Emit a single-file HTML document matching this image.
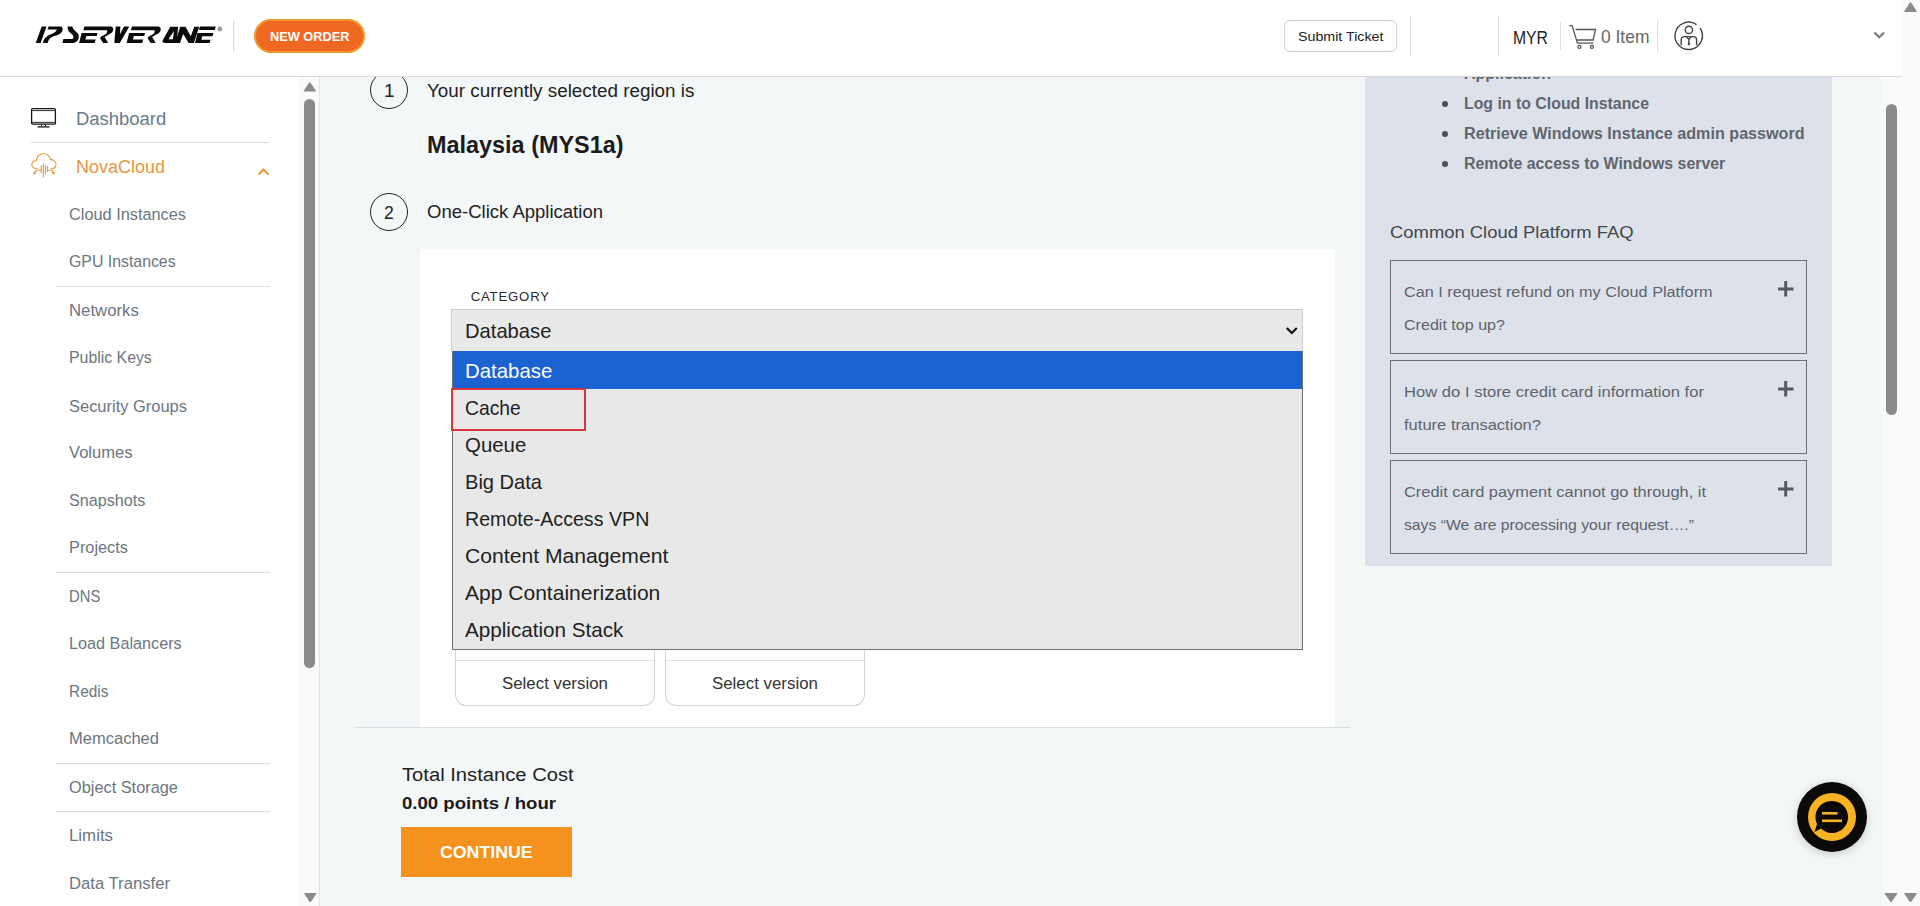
<!DOCTYPE html>
<html><head><meta charset="utf-8"><style>
html,body{margin:0;padding:0;width:1920px;height:906px;overflow:hidden;background:#f4f7f8;}
body{position:relative;font-family:"Liberation Sans",sans-serif;}
.abs{position:absolute;}
.t{position:absolute;white-space:nowrap;line-height:1;transform-origin:0 0;}
</style></head><body>
<!-- main scroll track -->
<div class="abs" style="left:1881px;top:0;width:39px;height:906px;background:#fafafa"></div>
<div class="abs" style="left:1886px;top:104px;width:11px;height:311px;background:#8a8a8a;border-radius:6px"></div>
<!-- outer scrollbar arrows -->
<svg class="abs" style="left:1900px;top:0" width="20" height="906">
<path d="M4.6,11.5 L10.5,2.5 L16.4,11.5 Z" fill="#8a8a8a" stroke="#8a8a8a" stroke-width="1" stroke-linejoin="round"/>
<path d="M4.6,893.5 L16.4,893.5 L10.5,902 Z" fill="#8a8a8a" stroke="#8a8a8a" stroke-width="1" stroke-linejoin="round"/>
</svg>
<svg class="abs" style="left:1880px;top:880px" width="20" height="26">
<path d="M5,13.5 L17,13.5 L11,22 Z" fill="#8a8a8a" stroke="#8a8a8a" stroke-width="1" stroke-linejoin="round"/>
</svg>

<!-- right panel -->
<div class="abs" style="left:1365px;top:76px;width:467px;height:490px;background:#dce1ea"></div>
<div class="abs" style="left:1441.5px;top:100.5px;width:6.5px;height:6.5px;border-radius:50%;background:#4a4f55"></div>
<div class="abs" style="left:1441.5px;top:130.5px;width:6.5px;height:6.5px;border-radius:50%;background:#4a4f55"></div>
<div class="abs" style="left:1441.5px;top:160.5px;width:6.5px;height:6.5px;border-radius:50%;background:#4a4f55"></div>
<div class="abs" style="left:1390px;top:260px;width:415px;height:92px;border:1px solid #6b7077"></div>
<div class="abs" style="left:1390px;top:360px;width:415px;height:92px;border:1px solid #6b7077"></div>
<div class="abs" style="left:1390px;top:460px;width:415px;height:92px;border:1px solid #6b7077"></div>
<svg class="abs" style="left:1770px;top:270px" width="30" height="250">
<g fill="#555a60"><rect x="8" y="17.5" width="15.5" height="3"/><rect x="14.2" y="11" width="3" height="15.5"/>
<rect x="8" y="117.5" width="15.5" height="3"/><rect x="14.2" y="111" width="3" height="15.5"/>
<rect x="8" y="217.5" width="15.5" height="3"/><rect x="14.2" y="211" width="3" height="15.5"/></g>
</svg>

<!-- step circles -->
<div class="abs" style="left:370px;top:70.5px;width:36px;height:36px;border:1.3px solid #222;border-radius:50%"></div>
<div class="abs" style="left:370px;top:193px;width:36px;height:36px;border:1.3px solid #222;border-radius:50%"></div>

<!-- white card -->
<div class="abs" style="left:420px;top:249px;width:915px;height:478px;background:#fff"></div>
<div class="abs" style="left:355px;top:727px;width:995px;height:1px;background:#dcdfe2"></div>
<!-- version cards -->
<div class="abs" style="left:455px;top:600px;width:198px;height:105px;border:1px solid #d4d4d4;border-top:none;border-radius:0 0 11px 11px"></div>
<div class="abs" style="left:456px;top:660px;width:198px;height:1px;background:#e0e0e0"></div>
<div class="abs" style="left:665px;top:600px;width:198px;height:105px;border:1px solid #d4d4d4;border-top:none;border-radius:0 0 11px 11px"></div>
<div class="abs" style="left:666px;top:660px;width:198px;height:1px;background:#e0e0e0"></div>

<!-- select -->
<div class="abs" style="left:451px;top:309px;width:850px;height:41px;background:#e9e9e9;border:1px solid #cfcfcf;border-bottom:none"></div>
<svg class="abs" style="left:1280px;top:320px" width="24" height="20"><path d="M6.8,8 L11.8,13 L16.8,8" fill="none" stroke="#111" stroke-width="2.2"/></svg>
<!-- dropdown -->
<div class="abs" style="left:452px;top:351px;width:849px;height:298px;background:#e8e8e8;border:1px solid #6f6f6f;border-top:none"></div>
<div class="abs" style="left:453px;top:351px;width:849px;height:38px;background:#1b63d3"></div>
<div class="abs" style="left:450.5px;top:387.5px;width:131px;height:39px;border:2px solid #d9363e"></div>

<!-- continue -->
<div class="abs" style="left:401px;top:827px;width:171px;height:50px;background:#f5921e"></div>

<!-- chat -->
<div class="abs" style="left:1797px;top:782px;width:70px;height:70px;border-radius:50%;background:#0c0909;box-shadow:0 2px 10px rgba(0,0,0,0.18)"></div>
<svg class="abs" style="left:1797px;top:782px" width="70" height="70">
<circle cx="35" cy="35" r="24" fill="#f6b323"/>
<path d="M35,19 A16,16 0 1 1 24,46.5 L17.5,50 L20,42 A16,16 0 0 1 35,19 Z" fill="#0c0909"/>
<rect x="25" y="30" width="15.5" height="2.6" fill="#f6b323"/>
<rect x="25" y="37.5" width="20" height="2.6" fill="#f6b323"/>
</svg>

<!-- sidebar -->
<div class="abs" style="left:0;top:76px;width:319px;height:830px;background:#fff;border-right:1px solid #e3e3e3"></div>
<div class="abs" style="left:31px;top:142px;width:238px;height:1px;background:#d8dadc"></div>
<div class="abs" style="left:56px;top:286px;width:214px;height:1px;background:#dcdee0"></div>
<div class="abs" style="left:56px;top:572px;width:214px;height:1px;background:#dcdee0"></div>
<div class="abs" style="left:56px;top:763px;width:214px;height:1px;background:#dcdee0"></div>
<div class="abs" style="left:56px;top:811px;width:214px;height:1px;background:#dcdee0"></div>
<div class="abs" style="left:299px;top:76px;width:20px;height:830px;background:#fafafa"></div>
<div class="abs" style="left:304px;top:99px;width:11px;height:569px;background:#8a8a8a;border-radius:6px"></div>
<svg class="abs" style="left:300px;top:76px" width="19" height="830">
<path d="M4,15 L9.8,6.5 L15.6,15 Z" fill="#8a8a8a" stroke="#8a8a8a" stroke-width="1" stroke-linejoin="round"/>
<path d="M4.6,817.5 L16,817.5 L10.3,826 Z" fill="#8a8a8a" stroke="#8a8a8a" stroke-width="1" stroke-linejoin="round"/>
</svg>
<!-- dashboard icon -->
<svg class="abs" style="left:30px;top:106px" width="28" height="24" fill="none" stroke="#151515">
<rect x="1.6" y="2.6" width="23.8" height="15.6" rx="1.2" stroke-width="1.3"/>
<path d="M2.2,4.6 L24.8,4.6" stroke-width="0.9"/>
<path d="M2.2,16.4 L24.8,16.4" stroke-width="0.9"/>
<path d="M11.5,18.6 L11.5,20.3 M15.5,18.6 L15.5,20.3" stroke-width="1"/>
<path d="M7.5,20.9 L19.5,20.9" stroke-width="1.3"/>
</svg>
<!-- cloud icon -->
<svg class="abs" style="left:30px;top:152px" width="28" height="27" fill="none" stroke="#e8963e" stroke-width="1.1">
<path d="M7.5,16.8 C3.5,16.8 1.6,14.6 1.8,12.2 C2.1,9.7 4.2,8.5 6.3,8.8 C6.7,4.6 9.8,1.8 13.5,1.8 C17.2,1.8 19.8,4.4 20.4,7.6 C23.6,7.4 26,9.6 26,12.5 C26,15.2 24,16.8 20.5,16.8"/>
<path d="M11.2,13.5 L11.2,21 M13.3,11.5 L13.3,25.5 M15.4,13 L15.4,22.5 M17.5,14 L17.5,20"/>
<path d="M11.2,18.2 L6.3,18.2 L5.2,20.2 M17.5,18.2 L22,18.2 L23,20.2"/>
<circle cx="4.6" cy="21.1" r="1.4" fill="#e8963e" stroke="none"/><circle cx="23.4" cy="21.1" r="1.4" fill="#e8963e" stroke="none"/>
</svg>
<svg class="abs" style="left:254px;top:164px" width="20" height="14"><path d="M4.5,10.5 L9.5,5.5 L14.5,10.5" fill="none" stroke="#e8963e" stroke-width="2"/></svg>

<!-- header -->
<div class="abs" style="left:0;top:0;width:1902px;height:906px;z-index:10;pointer-events:none">
<div class="abs" style="left:0;top:0;width:1902px;height:76px;background:#fff"></div>
<div class="abs" style="left:0;top:76px;width:1902px;height:1px;background:#dadada"></div>
<svg class="abs" style="left:0;top:0" width="240" height="76" viewBox="0 0 240 76">
<g fill="#0b0b0b">
<path d="M41.7,26.6 L46.5,26.6 L40.6,43.1 L35.7,43.1 Z"/>
<path d="M48.6,26.6 L60,26.6 C62.5,26.6 63,28.5 62.5,30.5 C61.8,33 59.5,34.5 56,35.6 C51.5,37 48.5,38.5 47.8,43.1 L42.9,43.1 C43.8,38.5 46.5,36 50.5,34.5 C53.5,33.3 56,32.5 56.9,29.6 L47.5,29.6 Z"/>
<path d="M67.6,26.6 L72.5,26.6 C72.8,28.5 73.5,29.8 75.5,31.3 C78,33.2 79,35 78.8,37 C78.6,40.5 76,43.1 72,43.1 L62.4,43.1 L63.4,39.1 L71.5,39.1 C73,39.1 73.8,37.6 73.3,36.2 C72.8,35 71.5,33.8 70,32.6 C68.2,31.2 67.5,29.5 67.6,26.6 Z"/>
<g>
<path d="M84.4,26.6 L110,26.6 C113.5,26.6 113.8,29.4 112.8,31.3 C111.8,33.1 110.2,33.9 108.4,34.7 L104.6,36.9 L108.2,43.1 L103.2,43.1 L100.5,39 C99.9,38 100.4,37.1 101.8,36.3 L105.8,34 C107.4,33 107.6,30.3 106.4,30.3 L83.3,30.3 Z"/>
<path d="M81.6,33 L97.6,33 L96.7,36 L86.4,36 L85.4,39.6 L95.7,39.6 L94.7,43.1 L79.1,43.1 Z"/>
</g>
<path d="M115.7,26.6 L120.4,26.6 L119.9,34.3 L124,26.6 L129.3,26.6 L119.8,43.1 L114.3,43.1 Z"/>
<g transform="translate(47.5,0)">
<path d="M84.4,26.6 L110,26.6 C113.5,26.6 113.8,29.4 112.8,31.3 C111.8,33.1 110.2,33.9 108.4,34.7 L104.6,36.9 L108.2,43.1 L103.2,43.1 L100.5,39 C99.9,38 100.4,37.1 101.8,36.3 L105.8,34 C107.4,33 107.6,30.3 106.4,30.3 L83.3,30.3 Z"/>
<path d="M81.6,33 L97.6,33 L96.7,36 L86.4,36 L85.4,39.6 L95.7,39.6 L94.7,43.1 L79.1,43.1 Z"/>
</g>
<path d="M170.3,26.7 L178.1,26.7 L176.6,43.1 L165,43.1 C162.6,43.1 162,41.6 163,39.8 Z M174,31.1 L168.5,39.2 L172.9,39.2 Z" fill-rule="evenodd"/>
<path d="M180.2,26.7 L185.5,26.7 L190.8,36.2 L194.3,26.7 L199.2,26.7 L193.9,43.1 L188.6,43.1 L183.2,34 L180,43.1 L175.1,43.1 Z"/>
<path d="M200,26.6 L215.8,26.6 L214.8,30 L198.9,30 Z"/>
<path d="M197.5,33 L213.5,33 L212.5,36.2 L202.3,36.2 L201.4,39.8 L210.6,39.8 L209.6,43.1 L195,43.1 Z"/>
</g>
<circle cx="219.8" cy="29" r="2.4" fill="#9a9a9a"/>
</svg>
<div class="abs" style="left:233px;top:20px;width:1px;height:32px;background:#d8d8d8"></div>
<div class="abs" style="left:254px;top:19px;width:111px;height:34px;border-radius:17px;background:#f3962a"></div>
<div class="abs" style="left:256px;top:21px;width:107px;height:30px;border-radius:15px;background:#ef6922"></div>
<div class="abs" style="left:1284px;top:20px;width:111px;height:30px;border:1px solid #cfcfcf;border-radius:6px"></div>
<div class="abs" style="left:1410px;top:16px;width:1px;height:40px;background:#dedede"></div>
<div class="abs" style="left:1498px;top:16px;width:1px;height:40px;background:#dedede"></div>
<div class="abs" style="left:1560px;top:22px;width:1px;height:28px;background:#dedede"></div>
<div class="abs" style="left:1657px;top:20px;width:1px;height:32px;background:#dedede"></div>
<svg class="abs" style="left:1566px;top:22px" width="32" height="30" fill="none" stroke="#555" stroke-width="1.3">
<path d="M3.3,3.6 L6.1,3.6 L11.4,21.2 L27.5,21.2"/>
<path d="M9.7,7.5 L29.5,7.5 L27.1,18 L11,18"/>
<circle cx="13.4" cy="24.9" r="1.5"/><circle cx="25.9" cy="24.9" r="1.5"/>
</svg>
<svg class="abs" style="left:1672px;top:19px" width="34" height="34" fill="none" stroke="#444" stroke-width="1.4">
<path d="M27.92,8.94 A13.7,13.7 0 1 1 24.56,5.58"/>
<circle cx="16.9" cy="10.9" r="3.6"/>
<path d="M9.2,26.3 L9.2,21 Q9.2,17.6 12.6,17.6 L21.2,17.6 Q24.6,17.6 24.6,21 L24.6,26.3"/>
<path d="M14.6,17.6 L16.9,20.6 L19.2,17.6 M16.9,20.6 L16.9,25"/>
<path d="M16.9,23.6 L17.9,25 L16.9,26.2 L15.9,25 Z" fill="#444" stroke-width="0.8"/>
</svg>
<svg class="abs" style="left:1868px;top:26px" width="22" height="18"><path d="M6.5,6.5 L11.3,11.3 L16.1,6.5" fill="none" stroke="#7a7a7a" stroke-width="2.2"/></svg>
</div>

<div class="t" id="t0" style="left:269.50px;top:31.03px;font-size:12.89px;font-weight:700;color:#fff;transform:scaleX(0.9922);z-index:12;">NEW ORDER</div>
<div class="t" id="t1" style="left:1297.50px;top:31.03px;font-size:12.42px;font-weight:400;color:#222;transform:scaleX(1.1481);z-index:12;">Submit Ticket</div>
<div class="t" id="t2" style="left:1512.50px;top:30.03px;font-size:17.81px;font-weight:400;color:#222;transform:scaleX(0.8849);z-index:12;">MYR</div>
<div class="t" id="t3" style="left:1600.60px;top:29.02px;font-size:17.76px;font-weight:400;color:#666;transform:scaleX(0.9812);z-index:12;">0 Item</div>
<div class="t" id="t4" style="left:76.00px;top:111.03px;font-size:17.94px;font-weight:400;color:#687c8a;transform:scaleX(1.0288);">Dashboard</div>
<div class="t" id="t5" style="left:76.00px;top:159.03px;font-size:17.94px;font-weight:400;color:#e8963e;transform:scaleX(1.0028);">NovaCloud</div>
<div class="t" id="t6" style="left:69.00px;top:207.03px;font-size:16.56px;font-weight:400;color:#6c7680;transform:scaleX(0.9860);">Cloud Instances</div>
<div class="t" id="t7" style="left:69.00px;top:253.03px;font-size:17.19px;font-weight:400;color:#6c7680;transform:scaleX(0.9224);">GPU Instances</div>
<div class="t" id="t8" style="left:69.00px;top:303.03px;font-size:16.56px;font-weight:400;color:#6c7680;transform:scaleX(1.0135);">Networks</div>
<div class="t" id="t9" style="left:69.00px;top:350.03px;font-size:16.56px;font-weight:400;color:#6c7680;transform:scaleX(0.9577);">Public Keys</div>
<div class="t" id="t10" style="left:69.00px;top:399.03px;font-size:16.56px;font-weight:400;color:#6c7680;transform:scaleX(0.9946);">Security Groups</div>
<div class="t" id="t11" style="left:69.00px;top:445.03px;font-size:16.56px;font-weight:400;color:#6c7680;transform:scaleX(1.0020);">Volumes</div>
<div class="t" id="t12" style="left:69.00px;top:493.03px;font-size:16.56px;font-weight:400;color:#6c7680;transform:scaleX(0.9769);">Snapshots</div>
<div class="t" id="t13" style="left:69.00px;top:540.03px;font-size:16.56px;font-weight:400;color:#6c7680;transform:scaleX(0.9869);">Projects</div>
<div class="t" id="t14" style="left:69.00px;top:588.03px;font-size:17.19px;font-weight:400;color:#6c7680;transform:scaleX(0.8625);">DNS</div>
<div class="t" id="t15" style="left:69.00px;top:636.03px;font-size:16.56px;font-weight:400;color:#6c7680;transform:scaleX(0.9800);">Load Balancers</div>
<div class="t" id="t16" style="left:69.00px;top:684.03px;font-size:16.56px;font-weight:400;color:#6c7680;transform:scaleX(0.9311);">Redis</div>
<div class="t" id="t17" style="left:69.00px;top:731.03px;font-size:16.56px;font-weight:400;color:#6c7680;transform:scaleX(0.9984);">Memcached</div>
<div class="t" id="t18" style="left:69.00px;top:780.03px;font-size:16.56px;font-weight:400;color:#6c7680;transform:scaleX(0.9866);">Object Storage</div>
<div class="t" id="t19" style="left:69.00px;top:828.03px;font-size:16.56px;font-weight:400;color:#6c7680;transform:scaleX(1.0180);">Limits</div>
<div class="t" id="t20" style="left:69.00px;top:876.03px;font-size:16.58px;font-weight:400;color:#6c7680;transform:scaleX(1.0054);">Data Transfer</div>
<div class="t" id="t21" style="left:384.00px;top:82.02px;font-size:18.90px;font-weight:400;color:#222;">1</div>
<div class="t" id="t22" style="left:384.00px;top:204.03px;font-size:18.62px;font-weight:400;color:#222;transform:scaleX(0.9461);">2</div>
<div class="t" id="t23" style="left:426.60px;top:83.03px;font-size:17.94px;font-weight:400;color:#222;transform:scaleX(1.0503);">Your currently selected region is</div>
<div class="t" id="t24" style="left:427.00px;top:133.03px;font-size:23.87px;font-weight:700;color:#1b1b1b;transform:scaleX(0.9816);">Malaysia (MYS1a)</div>
<div class="t" id="t25" style="left:427.00px;top:204.03px;font-size:17.94px;font-weight:400;color:#222;transform:scaleX(1.0322);">One-Click Application</div>
<div class="t" id="t26" style="left:470.70px;top:290.03px;font-size:13.18px;font-weight:400;color:#2a2a2a;letter-spacing:0.803px;">CATEGORY</div>
<div class="t" id="t27" style="left:464.60px;top:322.03px;font-size:19.73px;font-weight:400;color:#222;transform:scaleX(1.0232);">Database</div>
<div class="t" id="t28" style="left:464.70px;top:362.03px;font-size:19.32px;font-weight:400;color:#fff;transform:scaleX(1.0557);">Database</div>
<div class="t" id="t29" style="left:464.70px;top:399.03px;font-size:19.32px;font-weight:400;color:#222;transform:scaleX(0.9995);">Cache</div>
<div class="t" id="t30" style="left:464.70px;top:435.03px;font-size:20.05px;font-weight:400;color:#222;transform:scaleX(1.0190);">Queue</div>
<div class="t" id="t31" style="left:464.70px;top:473.03px;font-size:19.32px;font-weight:400;color:#222;transform:scaleX(1.0401);">Big Data</div>
<div class="t" id="t32" style="left:464.70px;top:509.02px;font-size:20.35px;font-weight:400;color:#222;transform:scaleX(0.9646);">Remote-Access VPN</div>
<div class="t" id="t33" style="left:464.70px;top:546.03px;font-size:20.05px;font-weight:400;color:#222;transform:scaleX(1.0552);">Content Management</div>
<div class="t" id="t34" style="left:464.70px;top:584.03px;font-size:19.32px;font-weight:400;color:#222;transform:scaleX(1.0892);">App Containerization</div>
<div class="t" id="t35" style="left:464.70px;top:621.03px;font-size:19.32px;font-weight:400;color:#222;transform:scaleX(1.0684);">Application Stack</div>
<div class="t" id="t36" style="left:501.70px;top:676.03px;font-size:16.56px;font-weight:400;color:#333;transform:scaleX(1.0188);">Select version</div>
<div class="t" id="t37" style="left:712.20px;top:676.03px;font-size:16.56px;font-weight:400;color:#333;transform:scaleX(1.0188);">Select version</div>
<div class="t" id="t38" style="left:402.30px;top:766.03px;font-size:18.35px;font-weight:400;color:#222;transform:scaleX(1.1002);">Total Instance Cost</div>
<div class="t" id="t39" style="left:402.00px;top:795.03px;font-size:17.25px;font-weight:700;color:#1b1b1b;transform:scaleX(1.0783);">0.00 points / hour</div>
<div class="t" id="t40" style="left:440.40px;top:844.03px;font-size:17.19px;font-weight:700;color:#fff;transform:scaleX(1.0318);">CONTINUE</div>
<div class="t" id="t41" style="left:1464.00px;top:66.03px;font-size:16.56px;font-weight:700;color:#60666d;transform:scaleX(0.9656);">Application</div>
<div class="t" id="t42" style="left:1464.00px;top:96.03px;font-size:16.56px;font-weight:700;color:#60666d;transform:scaleX(0.9583);">Log in to Cloud Instance</div>
<div class="t" id="t43" style="left:1464.00px;top:126.03px;font-size:16.56px;font-weight:700;color:#60666d;transform:scaleX(0.9752);">Retrieve Windows Instance admin password</div>
<div class="t" id="t44" style="left:1464.00px;top:156.03px;font-size:16.56px;font-weight:700;color:#60666d;transform:scaleX(0.9604);">Remote access to Windows server</div>
<div class="t" id="t45" style="left:1390.40px;top:224.03px;font-size:17.25px;font-weight:400;color:#41464b;transform:scaleX(1.0676);">Common Cloud Platform FAQ</div>
<div class="t" id="t46" style="left:1404.00px;top:284.03px;font-size:15.18px;font-weight:400;color:#5d646c;transform:scaleX(1.0699);">Can I request refund on my Cloud Platform</div>
<div class="t" id="t47" style="left:1404.00px;top:317.03px;font-size:15.18px;font-weight:400;color:#5d646c;transform:scaleX(1.0596);">Credit top up?</div>
<div class="t" id="t48" style="left:1404.00px;top:384.03px;font-size:15.18px;font-weight:400;color:#5d646c;transform:scaleX(1.0946);">How do I store credit card information for</div>
<div class="t" id="t49" style="left:1404.00px;top:417.03px;font-size:15.18px;font-weight:400;color:#5d646c;transform:scaleX(1.0901);">future transaction?</div>
<div class="t" id="t50" style="left:1404.00px;top:484.03px;font-size:15.18px;font-weight:400;color:#5d646c;transform:scaleX(1.0818);">Credit card payment cannot go through, it</div>
<div class="t" id="t51" style="left:1404.00px;top:517.03px;font-size:15.18px;font-weight:400;color:#5d646c;transform:scaleX(1.0369);">says “We are processing your request….”</div>
</body></html>
